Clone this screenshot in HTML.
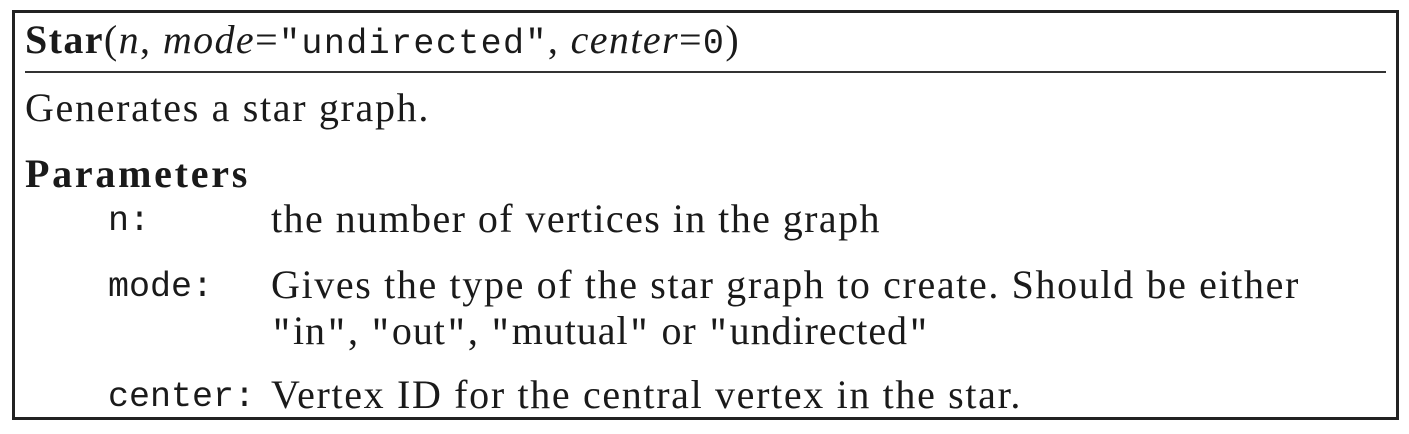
<!DOCTYPE html>
<html><head><meta charset="utf-8"><style>
html,body{margin:0;padding:0;background:#fff;width:1409px;height:434px;overflow:hidden}
body{position:relative;font-family:"Liberation Serif",serif;color:#1a1a1a;font-size:40px}
.box{position:absolute;left:12px;top:10px;width:1381px;height:404px;border:3px solid #222}
.rule{position:absolute;left:25px;top:71px;width:1361px;height:2px;background:#333}
.l{position:absolute;white-space:nowrap;line-height:1}
.m{font-family:"Liberation Mono",monospace;font-size:35px}
</style></head><body>
<div class="box"></div>
<div class="rule"></div>
<div class="l" style="left:25px;top:20px"><b>Star</b>(<i>n</i>, <i>mode</i>=<span class="m">"undirected"</span>, <i>center</i>=<span class="m">0</span>)</div>
<div class="l" style="left:25px;top:88px">Generates a star graph.</div>
<div class="l" style="left:25px;top:154px"><b>Parameters</b></div>
<div class="l m" style="left:108px;top:204px">n:</div>
<div class="l" style="left:271px;top:199px">the number of vertices in the graph</div>
<div class="l m" style="left:108px;top:270px">mode:</div>
<div class="l" style="left:271px;top:265px">Gives the type of the star graph to create. Should be either</div>
<div class="l" style="left:271px;top:311px"><span class="m">"</span>in<span class="m">"</span>, <span class="m">"</span>out<span class="m">"</span>, <span class="m">"</span>mutual<span class="m">"</span> or <span class="m">"</span>undirected<span class="m">"</span></div>
<div class="l m" style="left:108px;top:380px">center:</div>
<div class="l" style="left:271px;top:375px">Vertex ID for the central vertex in the star.</div>
<script>
const targets=[[0,740],[1,430],[2,250],[4,881],[6,1300],[7,930],[9,1022]];
const ls=document.querySelectorAll('.l');
targets.forEach(([i,r])=>{const e=ls[i];const w=e.getBoundingClientRect();const want=r-w.left;const n=e.textContent.length;e.style.letterSpacing=((want-w.width)/n)+'px';});
</script>
</body></html>
